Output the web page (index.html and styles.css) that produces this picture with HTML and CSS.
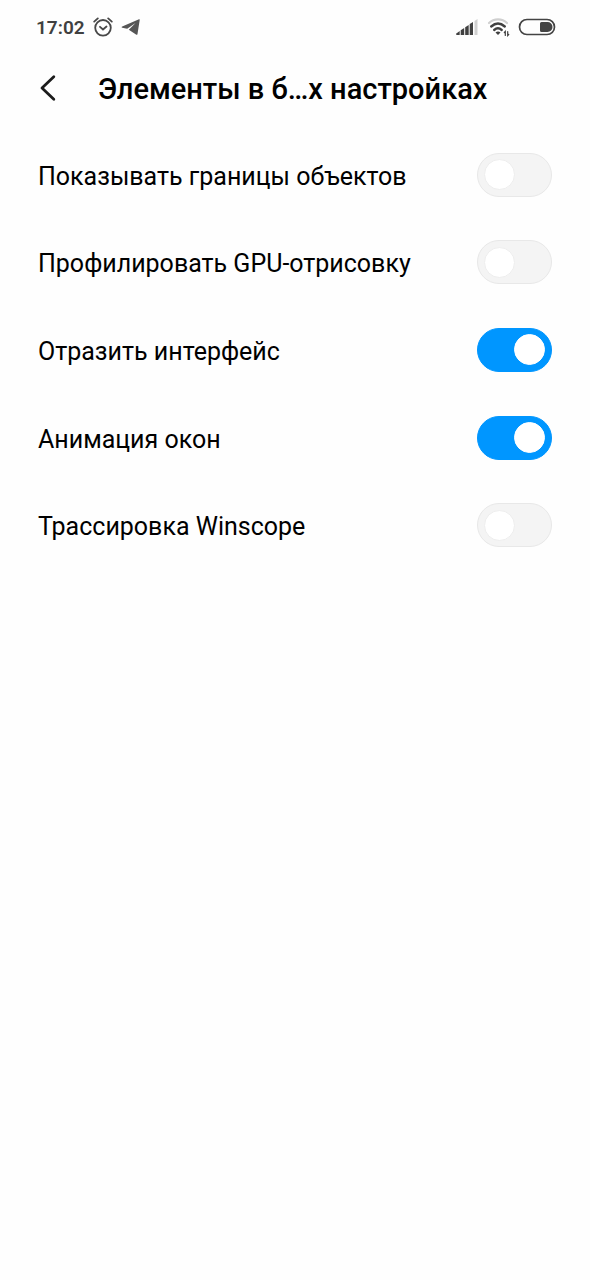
FILE: index.html
```html
<!DOCTYPE html>
<html lang="ru">
<head>
<meta charset="utf-8">
<meta name="viewport" content="width=device-width, initial-scale=1">
<title>Элементы в быстрых настройках</title>
<link rel="stylesheet" href="styles.css">
</head>
<body>
<div class="status">
  <div class="status-group">
    <span class="time">17:02</span>
    <svg class="alarm" width="20" height="20" viewBox="0 0 20 20" fill="none" stroke="#484848" stroke-width="1.8" stroke-linecap="round" aria-hidden="true">
      <circle cx="10" cy="10.8" r="7.8"/>
      <path d="M1.2 4.6 4.8 1.4M18.8 4.6 15.2 1.4M7 9.8l3 2.700 3.500-3"/>
    </svg>
    <svg class="plane" width="20" height="18" viewBox="0 0 20 18" aria-hidden="true">
      <path fill="#565656" d="M18 1.200 1.200 8.400c-.8.4-.7 1.100.1 1.300l4.900 1 8.300-5.700-6.700 6.800 7.200 4.800c.8.4 1.300.2 1.500-.7L18.700 1.900c.2-.6-.1-.9-.7-.7z"/>
    </svg>
  </div>
  <div class="status-group">
    <svg width="23" height="17" viewBox="0 0 23 17" aria-hidden="true">
      <g fill="#404040">
        <path d="M0 14.800 3.700 12v4H1q-1 0-1-1.200z"/>
        <path d="M4.700 11.200 8.200 9v7H4.700z"/>
        <path d="M9.200 8.200 12.700 6v10H9.200z"/>
        <path d="M13.700 5 17 3v13h-3.300z"/>
      </g>
      <path fill="#d0d0d0" d="M18.500 2 21.500 0v16h-3z"/>
    </svg>
    <svg class="wifi" width="24" height="20" viewBox="0 0 24 20" fill="none" stroke-linecap="round" aria-hidden="true">
      <path stroke="#cfcfcf" stroke-width="2.2" d="M2 6c5-4.800 13-4.800 18 0"/>
      <path stroke="#404040" stroke-width="2.4" d="M4.200 9.500c4.300-3.800 9.300-3.800 13.600 0M7.200 13c2.500-2.200 5-2.200 7.500 0"/>
      <path fill="#404040" d="M8.500 15.500q2.500-2 5 0L11 18z"/>
      <path stroke="#404040" stroke-width="1.200" d="M18.300 18.500v-4l-1 1M20.700 14.500v4l1-1"/>
    </svg>
    <svg class="battery" width="38" height="18" viewBox="0 0 38 18" aria-hidden="true">
      <rect x="1.500" y="1.500" width="35" height="15" rx="7.500" fill="none" stroke="#444" stroke-width="1.700"/>
      <path fill="#444" d="M23.500 4H29.500a5 5 0 0 1 0 10h-6a1.500 1.500 0 0 1-1.500-1.500v-7A1.500 1.500 0 0 1 23.500 4z"/>
    </svg>
  </div>
</div>
<header class="header">
  <button class="back" type="button" aria-label="Назад">
    <svg width="18" height="28" viewBox="0 0 18 28" fill="none" stroke="#1c1c1c" stroke-width="2.800" stroke-linecap="round" stroke-linejoin="round" aria-hidden="true"><path d="M15.800 2.800 4 14l11.800 11.200"/></svg>
  </button>
  <h1 class="title">Элементы в б…х настройках</h1>
</header>
<main class="list">
  <label class="row"><span class="label">Показывать границы объектов</span><input class="switch" type="checkbox" role="switch"></label>
  <label class="row"><span class="label">Профилировать GPU-отрисовку</span><input class="switch" type="checkbox" role="switch"></label>
  <label class="row"><span class="label">Отразить интерфейс</span><input class="switch" type="checkbox" role="switch" checked></label>
  <label class="row"><span class="label">Анимация окон</span><input class="switch" type="checkbox" role="switch" checked></label>
  <label class="row"><span class="label">Трассировка Winscope</span><input class="switch" type="checkbox" role="switch"></label>
</main>
</body>
</html>
```
FILE: styles.css
```css
* { box-sizing: border-box; }
body {
  margin: 0;
  background: #fefefe;
  color: #000;
  font-family: Roboto, "Noto Sans", sans-serif;
}
.status {
  display: flex;
  align-items: center;
  justify-content: space-between;
  height: 54px;
  padding: 0 34px 0 36px;
}
.status-group {
  display: flex;
  align-items: center;
}
.time {
  padding-top: 2px;
  color: #404040;
  font-size: 19px;
  font-weight: 600;
  line-height: 24px;
}
.alarm, .plane, .wifi { margin-left: 8px; }
.battery { margin-left: 7px; }
.header {
  display: flex;
  align-items: center;
  height: 68px;
  padding: 0 38px;
}
.back {
  display: flex;
  width: 60px;
  padding: 0;
  border: 0;
  background: none;
}
.title {
  margin: 0;
  padding-top: 2px;
  font-size: 29px;
  font-weight: 500;
  line-height: 36px;
}
.list {
  display: grid;
  grid-auto-rows: 1fr;
  min-height: 438px;
  margin-top: 9px;
}
.row {
  display: flex;
  align-items: center;
  justify-content: space-between;
  padding: 0 38px;
  font-size: 25px;
  line-height: 32px;
}
.label { padding-top: 4px; }
.switch {
  appearance: none;
  display: flex;
  align-items: center;
  width: 75px;
  height: 44px;
  margin: 0;
  padding: 0 6px;
  border: 1px solid #e8e8e8;
  border-radius: 22px;
  background: #f4f4f4;
}
.switch::before {
  content: "";
  box-sizing: border-box;
  width: 31px;
  height: 31px;
  border: 1px solid #eee;
  border-radius: 50%;
  background: #fff;
}
.switch:checked {
  justify-content: flex-end;
  border-color: #0096ff;
  background: #0096ff;
}
.switch:checked::before { border-color: #fff; }
```
